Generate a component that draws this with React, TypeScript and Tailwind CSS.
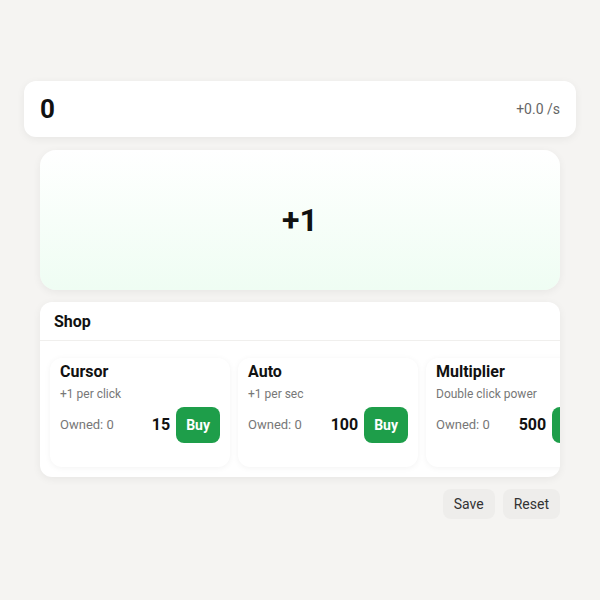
import React from "react";

const items = [
  { name: "Cursor", desc: "+1 per click", cost: 15 },
  { name: "Auto", desc: "+1 per sec", cost: 100 },
  { name: "Multiplier", desc: "Double click power", cost: 500 },
];

export default function App() {
  return (
    <div
      className="min-h-screen w-full bg-[#f5f4f2] flex flex-col justify-center px-6"
      style={{ fontFamily: "Roboto, 'Noto Sans', sans-serif" }}
    >
      <div className="h-14 bg-white rounded-xl shadow-[0_2px_8px_rgba(0,0,0,0.06)] flex items-center justify-between px-4">
        <span className="text-[26px] font-bold text-[#111]">0</span>
        <span className="text-sm text-[#666]">+0.0 /s</span>
      </div>
      <div className="mx-4 mt-[13px] h-[140px] rounded-2xl bg-gradient-to-b from-white to-[#effdf3] shadow-[0_2px_8px_rgba(0,0,0,0.06)] flex items-center justify-center">
        <span className="text-[32px] font-bold text-[#111]">+1</span>
      </div>
      <div className="mx-4 mt-3 bg-white rounded-xl shadow-[0_2px_8px_rgba(0,0,0,0.06)] overflow-hidden">
        <div className="h-[39px] pt-px px-3.5 flex items-center border-b border-[#f0efed]">
          <span className="text-base font-bold text-[#111]">Shop</span>
        </div>
        <div className="flex gap-2 px-2.5 pt-[17px] pb-2.5 overflow-hidden">
          {items.map((it) => (
            <div
              key={it.name}
              className="shrink-0 w-[180px] rounded-xl bg-white shadow-[0_1px_6px_rgba(0,0,0,0.05)] px-2.5 pt-1 pb-6"
            >
              <div className="text-base font-bold text-[#111] leading-5">{it.name}</div>
              <div className="text-xs text-[#777] mt-1">{it.desc}</div>
              <div className="flex items-center justify-between mt-[5px]">
                <span className="text-[13px] text-[#777]">Owned: 0</span>
                <div className="flex items-center gap-1.5">
                  <span className="text-base font-bold text-[#111]">{it.cost}</span>
                  <button className="bg-[#1e9e4a] text-white text-sm font-bold rounded-lg px-2.5 h-9">
                    Buy
                  </button>
                </div>
              </div>
            </div>
          ))}
        </div>
      </div>
      <div className="mx-4 mt-3 flex justify-end gap-2">
        <button className="h-[30px] px-[11px] rounded-lg bg-[#eeedeb] text-sm text-[#333]">Save</button>
        <button className="h-[30px] px-[11px] rounded-lg bg-[#eeedeb] text-sm text-[#333]">Reset</button>
      </div>
    </div>
  );
}
